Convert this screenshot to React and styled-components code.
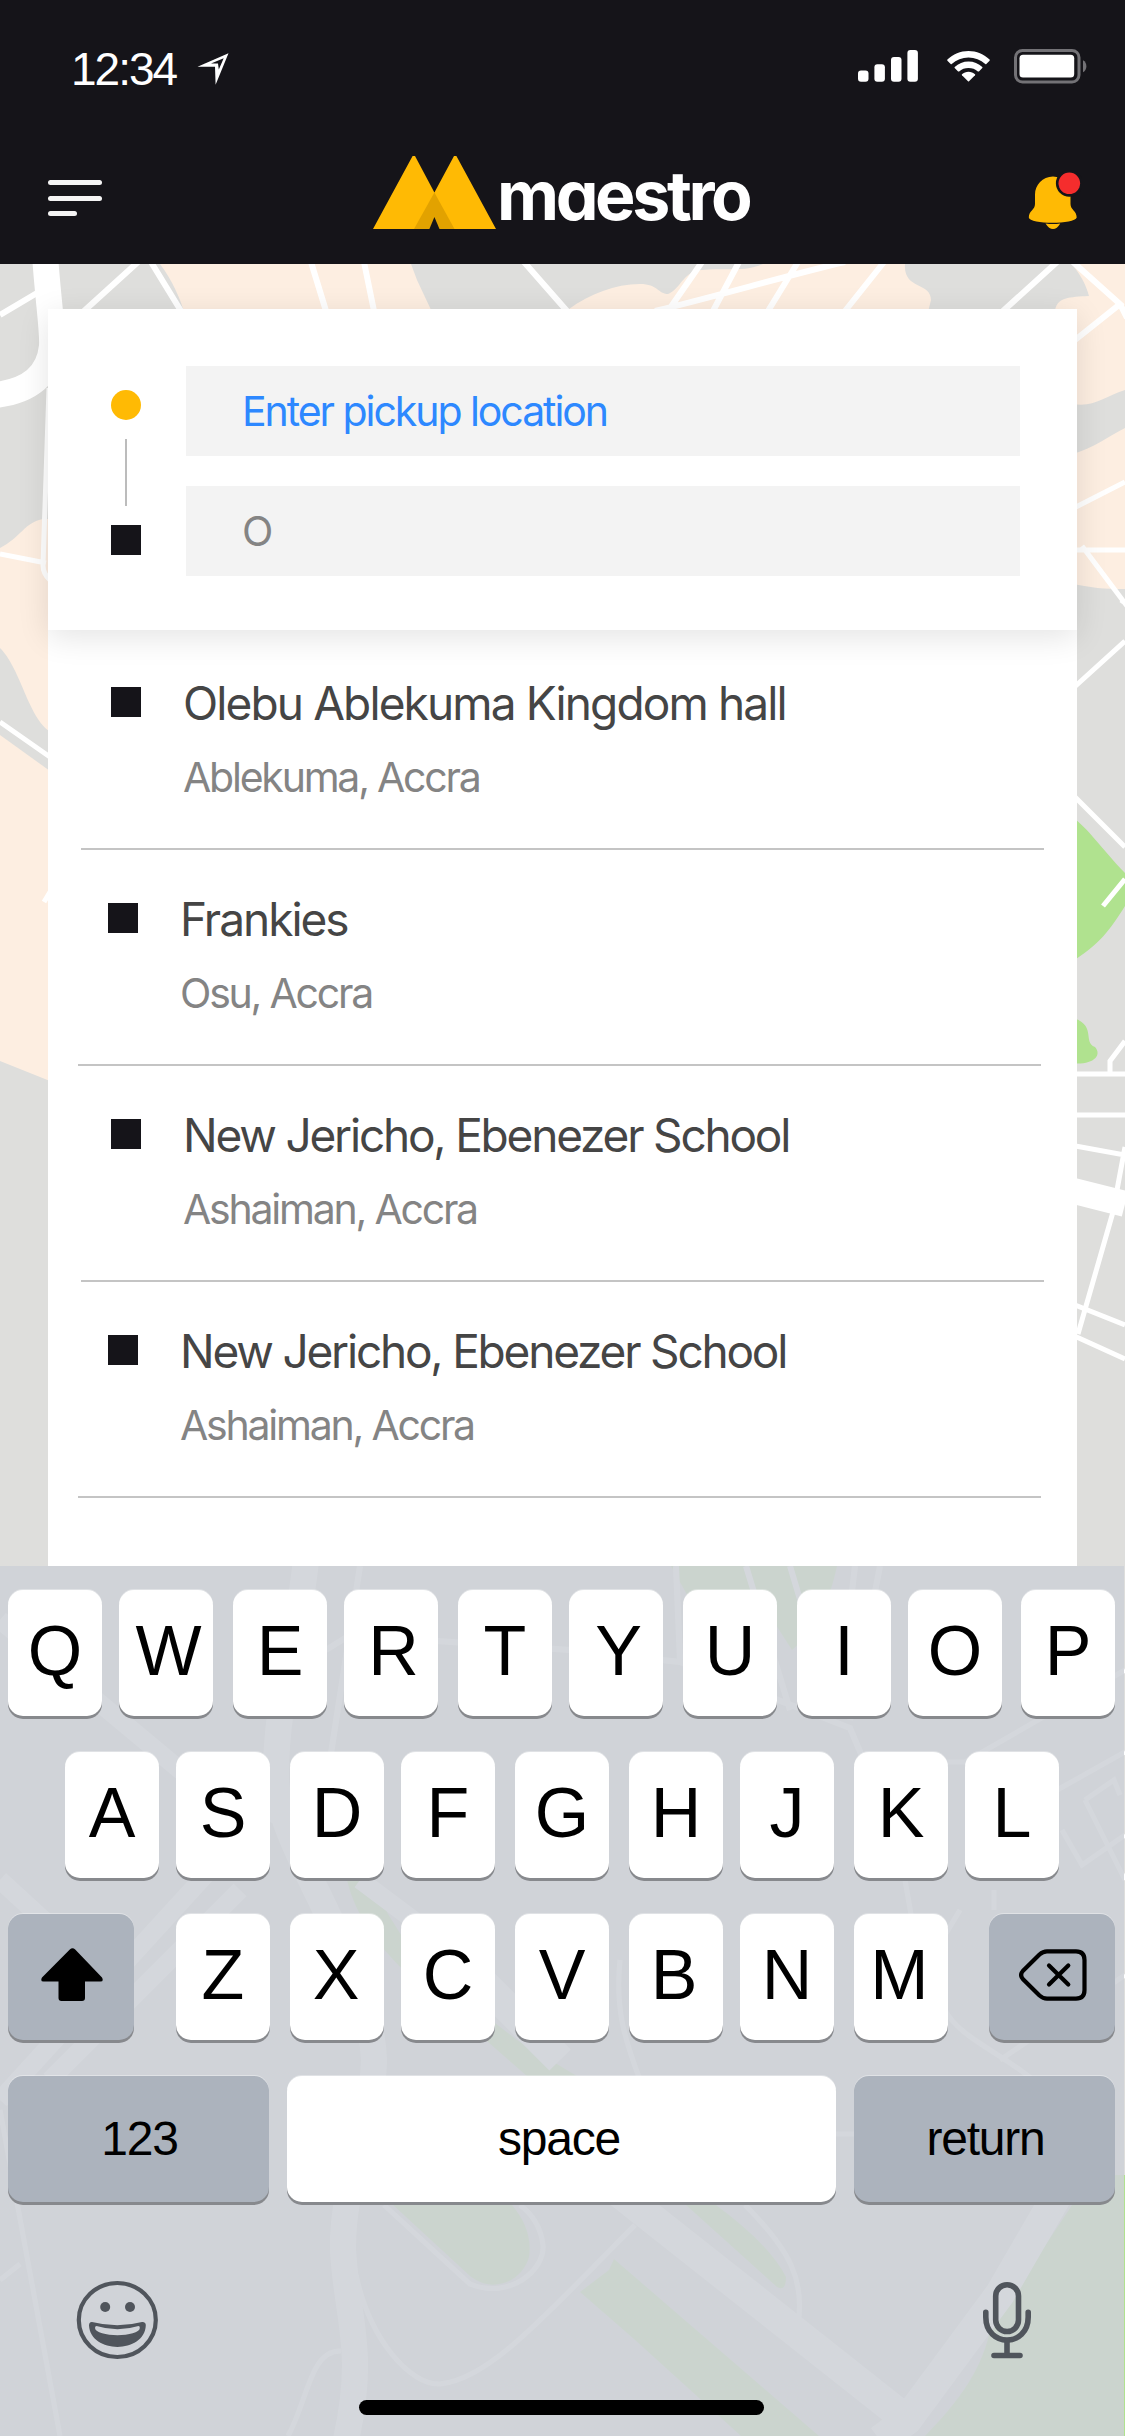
import React from "react";
import styled, { createGlobalStyle } from "styled-components";

const Global = createGlobalStyle`
  * { box-sizing: border-box; }
  body { margin: 0; background: #dededc; }
  button { border: 0; margin: 0; padding: 0; background: none; font: inherit; color: inherit; }
  svg { display: block; flex: none; }
`;

const ui = `"Inter", "Liberation Sans", sans-serif`;
const system = `"Liberation Sans", Arial, sans-serif`;

const Screen = styled.div`
  position: relative;
  width: 1125px;
  height: 2436px;
  overflow: hidden;
  display: flex;
  flex-direction: column;
  font-family: ${ui};
`;

const MapLayer = styled.svg`
  position: absolute;
  inset: 0;
  z-index: 0;
`;

const Header = styled.header`
  position: relative;
  z-index: 1;
  height: 264px;
  flex: none;
  background: #151419;
  color: #fff;
`;

const StatusBar = styled.div`
  display: flex;
  align-items: center;
  height: 136px;
  padding: 2px 38px 0 71px;
  font-family: ${system};
`;

const Time = styled.span`
  width: 126px;
  padding-bottom: 1px;
  font-size: 46px;
  line-height: 52px;
  letter-spacing: -2px;
`;

const StatusIcons = styled.div`
  margin-left: auto;
  padding-bottom: 6px;
  display: flex;
  align-items: center;
  gap: 29px;

  svg:last-child {
    margin-left: -5px;
  }
`;

const NavBar = styled.nav`
  display: flex;
  align-items: flex-start;
  justify-content: space-between;
  padding: 20px 43px 0 48px;
`;

const MenuButton = styled.button`
  display: flex;
  flex-direction: column;
  gap: 10.5px;
  padding-top: 24px;
  width: 54px;
`;

const MenuLine = styled.span`
  width: ${(p) => p.$width}px;
  height: 5px;
  border-radius: 3px;
  background: #f4f4f4;
`;

const Brand = styled.div`
  display: flex;
  align-items: flex-start;
  width: 380px;
  margin-left: -4px;
`;

const BrandName = styled.span`
  padding-top: 2px;
  font-size: 68px;
  font-weight: 700;
  line-height: 74px;
  letter-spacing: -3.4px;
  font-feature-settings: "cv11";
`;

const BellButton = styled.button`
  padding-top: 10px;
`;

const Main = styled.main`
  position: relative;
  z-index: 1;
  flex: none;
  height: 1302px;
  padding: 45px 48px 0;
`;

const Panel = styled.section`
  height: 1257px;
  background: #fff;
`;

const RouteCard = styled.form`
  display: flex;
  height: 321px;
  padding: 57px 57px 54px 63px;
  background: #fff;
  box-shadow: 0 7px 30px rgba(0, 0, 0, 0.11);
`;

const RouteTrack = styled.div`
  display: flex;
  flex-direction: column;
  align-items: center;
  width: 30px;
  padding-top: 24px;
  margin-right: 45px;
`;

const PickupDot = styled.span`
  width: 30px;
  height: 30px;
  border-radius: 50%;
  background: #ffba04;
`;

const TrackLine = styled.span`
  width: 2px;
  height: 67px;
  margin: 19px 0;
  background: #bcbcbc;
`;

const Square = styled.span`
  flex: none;
  width: 30px;
  height: 30px;
  background: #151419;
`;

const Fields = styled.div`
  flex: 1;
  display: flex;
  flex-direction: column;
  gap: 30px;
`;

const Field = styled.div`
  height: 90px;
  padding-left: 56px;
  background: #f3f3f3;
  color: ${(p) => (p.$active ? "#2d88ff" : "#848484")};
  font-size: 41px;
  line-height: 90px;
  letter-spacing: -2.05px;
`;

const PlaceList = styled.ul`
  list-style: none;
  margin: 0;
  padding: 4px 0 0 33px;
`;

const PlaceRow = styled.li`
  display: flex;
  width: 963px;
  height: 216px;
  margin-left: ${(p) => (p.$shifted ? -3 : 0)}px;
  padding: 41px 0 0 30px;
  border-bottom: 2px solid #c4c4c4;

  ${Square} {
    margin: 12px 42px 0 0;
  }
`;

const PlaceName = styled.div`
  font-size: 46px;
  line-height: 56px;
  letter-spacing: ${(p) => p.$tracking}px;
  color: #454545;
  white-space: nowrap;
`;

const PlaceArea = styled.div`
  margin-top: 21px;
  font-size: 41px;
  line-height: 50px;
  letter-spacing: -2.22px;
  color: #848484;
`;

const Keyboard = styled.section`
  position: relative;
  z-index: 1;
  width: 1124px;
  height: 870px;
  flex: none;
  display: flex;
  flex-direction: column;
  background: rgba(206, 210, 215, 0.88);
  font-family: ${system};
  color: #000;
`;

const Keys = styled.div`
  display: flex;
  flex-direction: column;
  gap: 36px;
  padding: 24px 0 0 8px;
`;

const KeyRow = styled.div`
  display: flex;
  height: 126px;
  padding-left: ${(p) => p.$indent || 0}px;
`;

const Key = styled.button`
  display: flex;
  align-items: center;
  justify-content: center;
  flex: none;
  width: ${(p) => p.$width || 94}px;
  height: 126px;
  margin-left: ${(p) => p.$gap || 0}px;
  padding-bottom: ${(p) => (p.$word ? 1 : 4)}px;
  padding-left: ${(p) => Math.max(p.$nudge || 0, 0)}px;
  padding-right: ${(p) => Math.max(-(p.$nudge || 0), 0)}px;
  border-radius: 15px;
  background: ${(p) => (p.$dark ? "#acb3bd" : "#fff")};
  box-shadow: 0 3px 0 #87898d, 0 -1px 0 rgba(255, 255, 255, 0.35);
  font-size: ${(p) => (p.$word ? 48 : 70)}px;
  letter-spacing: ${(p) => (p.$word ? -1.2 : 0)}px;
`;

const KeyboardFooter = styled.div`
  display: flex;
  justify-content: space-between;
  padding: 78px 92px 0 76px;
`;

const HomeIndicator = styled.div`
  width: 405px;
  height: 15px;
  margin: 40px 0 0 359px;
  border-radius: 8px;
  background: #000;
`;

function CityMap() {
  return (
    <MapLayer width="1125" height="2436" viewBox="0 0 1125 2436" fill="none">
      <rect width="1125" height="2436" fill="#dededc" />
      <g fill="#fdeee1">
        <path d="M160 264C172 280 180 298 184 312H432L417 280L411 264Z" />
        <path d="M569 309C590 294 615 284 640 284C658 284 658 294 668 294C680 290 684 270 702 270C730 268 745 272 763 264H905C903 290 931 282 931 300L928 312H569Z" />
        <path d="M1072 264C1082 277 1086 285 1089 296C1070 297 1056 297 1055 312L1060 400C1090 412 1100 398 1125 390V264Z" />
        <path d="M1070 455C1095 448 1110 435 1125 428V589C1105 589 1090 588 1070 583Z" />
        <path d="M0 548C20 538 25 522 43 519H60V735C30 732 24 672 0 648Z" />
        <path d="M0 735L50 771V1081L0 1061Z" />
      </g>
      <g fill="#b0e28f">
        <path d="M1070 815C1090 830 1100 847 1125 873V906C1110 930 1100 944 1070 963Z" />
        <path d="M1070 1017C1098 1024 1082 1042 1095 1047C1103 1056 1092 1066 1070 1063Z" />
        <path d="M671 1566H837C830 1600 815 1630 792 1650L760 1600H690Z" />
        <path d="M346 1875C360 1950 440 2000 488 2042L600 2140L686 2205L777 2287Q786 2292 786 2277Q770 2245 716 2205L600 2090L517 2040L420 1965L388 1914L372 1880Z" />
        <path d="M393 2205L470 2276C492 2294 522 2282 529 2257Q533 2230 512 2205L480 2170H380Z" />
        <path d="M614 2259L609 2270L580 2292L634 2339L741 2436H819Z" />
        <path d="M1125 2175H1090L1072 2205L1025 2276L993 2318C985 2360 970 2390 925 2436H1125Z" />
      </g>
      <g stroke="#fff" strokeWidth="6">
        <path d="M45 255C48 300 53 330 52 346C49 375 30 391 -5 395" strokeWidth="26" />
        <path d="M0 315L37 293M138 262L84 311M151 262L181 311M311 262L326 311M364 262L374 311M524 262L567 311" />
        <path d="M49 388L43 565Q43 574 50 580M0 554L46 563M0 722L50 757M44 902L50 892" strokeWidth="5" />
        <path d="M702 262L668 311M739 262L713 311M798 262L768 311M845 262C800 272 710 298 655 311M884 262L845 311M1057 262L1003 311M1073 262L1120 304L1070 344M1120 304L1127 318" />
        <path d="M1070 510L1125 482M1070 550H1125M1082 546L1127 606M1070 691L1125 641M1121 600L1125 603M1070 792L1125 847M1103 906L1125 879M1110 1072V1061L1125 1041M1070 1074H1125M1070 1115H1125M1070 1145L1125 1155M1117 1190L1125 1147M1113 1212L1078 1334M1070 1303L1125 1325M1070 1334L1125 1359" strokeWidth="5" />
        <path d="M1070 1190L1125 1204" strokeWidth="26" />
        <path d="M306 1560C298 1640 275 1700 276 1780C280 1850 370 1960 374 2060C372 2130 342 2180 343 2250C347 2320 366 2350 346 2440" strokeWidth="26" />
        <path d="M616 2190L907 2420M1066 2180L1000 2294L907 2420L880 2440M440 1940L560 2060" strokeWidth="30" />
        <path d="M0 1620L180 1770L330 1840M0 1880L60 1935M210 1870L0 2100M240 1890L50 2080M360 1880L440 1940" strokeWidth="18" />
        <path d="M360 1566L330 1760M326 1650L350 1635L570 1650L680 1662L850 1728L870 1775M676 1566L680 1660M746 1566L790 1710M790 1566L830 1700M855 1566L845 1650M880 1566L850 1720" />
        <path d="M910 1762H965L1125 1670M1050 1794L1125 1752M1085 1800L1114 1780L1120 1795M1085 1800L1125 1880M1062 1830L1082 1865L1125 1835M905 1880L912 1920M930 1960L960 1910M994 1890V1910M945 2010C960 2040 1010 2055 1050 2095M1000 2060L1125 1975M620 1960C615 2010 625 2040 640 2080" strokeWidth="5" />
        <path d="M0 2110L60 2436M0 2280L20 2264M384 2205L470 2284C510 2300 545 2270 543 2245Q540 2220 520 2205M356 2275C370 2340 410 2385 440 2384C490 2380 550 2310 635 2225M745 2205C790 2250 805 2280 798 2325M341 2351C310 2350 308 2400 288 2436M820 2134H860" strokeWidth="5" />
      </g>
    </MapLayer>
  );
}

function LocationArrow() {
  return (
    <svg width="32" height="32" viewBox="0 0 32 32">
      <path fillRule="evenodd" fill="#fff" d="M31.5 .3L.5 13.7H18L18.6 31.7ZM26.7 5.2L14 10.6H21L21.8 16.6Z" />
    </svg>
  );
}

function Signal() {
  return (
    <svg width="60" height="32" viewBox="0 0 60 32" fill="#fff">
      <rect x="0" y="20.5" width="10.5" height="11.2" rx="3" />
      <rect x="16.4" y="14.3" width="10.5" height="17.4" rx="3" />
      <rect x="33" y="7" width="10.5" height="24.7" rx="3" />
      <rect x="49.4" y="0" width="10.5" height="31.7" rx="3" />
    </svg>
  );
}

function Wifi() {
  return (
    <svg width="43" height="31" viewBox="0 0 43 31" fill="#fff">
      <path d="M21.5 0C29.5 0 37 3.2 42.6 8.6Q43 9.2 42.6 9.7L39.3 13Q38.8 13.4 38.3 13C33.7 8.6 27.8 6.4 21.5 6.4S9.3 8.6 4.7 13Q4.2 13.4 3.7 13L.4 9.7Q0 9.2.4 8.6C6 3.2 13.5 0 21.5 0Z" />
      <path d="M21.5 10.5C26.7 10.5 31.6 12.5 35.3 16Q35.7 16.5 35.3 17L31.9 20.4Q31.4 20.8 30.9 20.4C28.3 18.2 25 17 21.5 17S14.7 18.2 12.1 20.4Q11.6 20.8 11.1 20.4L7.7 17Q7.3 16.5 7.7 16C11.4 12.5 16.3 10.5 21.5 10.5Z" />
      <path d="M21.5 20.8C24 20.8 26.3 21.7 28 23.2Q28.5 23.7 28 24.2L22 30.2Q21.5 30.6 21 30.2L15 24.2Q14.5 23.7 15 23.2C16.7 21.7 19 20.8 21.5 20.8Z" />
    </svg>
  );
}

function Battery() {
  return (
    <svg width="73" height="35" viewBox="0 0 73 35">
      <rect x="1.5" y="1.5" width="63.5" height="31.5" rx="7" fill="none" stroke="#737276" strokeWidth="3" />
      <rect x="5.5" y="5.7" width="54.7" height="22.8" rx="3.5" fill="#fff" />
      <path d="M69 11.2C73.5 13.5 73.5 21 69 23.3Z" fill="#737276" />
    </svg>
  );
}

function BrandMark() {
  return (
    <svg width="124" height="74" viewBox="0 0 124 74">
      <path fill="#ffba04" d="M0 73L39.6 0H42L61.4 36.5L81 0H83.4L123 73Z" />
      <path fill="#e2a200" d="M61.4 36.5L81.5 73H41Z" />
      <path fill="#151419" d="M61.4 61L66.7 73.5H56.2Z" />
    </svg>
  );
}

function Bell() {
  return (
    <svg width="54" height="64" viewBox="0 0 54 64">
      <path fill="#ffba04" d="M25 10.5C35 10.5 42.5 19 42.5 28.5V38C42.5 44 48.7 44.5 48.7 51.5C47 58.5 1.5 58.5.8 51.5C.8 44.5 7 44 7 38V28.5C7 19 14.5 10.5 25 10.5Z" />
      <path fill="#ffba04" d="M17.5 57.5Q25 58.6 32.3 57.5Q29 63 25 63T17.5 57.5Z" />
      <circle cx="41.3" cy="17.3" r="13.4" fill="#151419" />
      <circle cx="41.3" cy="17.3" r="10.8" fill="#f52d2d" />
    </svg>
  );
}

function ShiftIcon() {
  return (
    <svg width="62" height="54" viewBox="0 0 62 54">
      <path d="M28.8 1.5Q31.5-1 34.2 1.5L61 29.5Q63 33.5 59.5 33.5H44V50Q44 53 41 53H20.5Q17.5 53 17.5 50V33.5H2.5Q-1 33.5 1 29.5Z" />
    </svg>
  );
}

function DeleteIcon() {
  return (
    <svg width="68" height="52" viewBox="0 0 68 52" fill="none" stroke="#000" strokeWidth="4.2" strokeLinejoin="round" strokeLinecap="round">
      <path d="M28 2.4H57Q65.5 2.4 65.5 11V41Q65.5 49.6 57 49.6H28Q24 49.6 20.5 46.5L3.8 30Q.4 26 3.8 22L20.5 5.5Q24 2.4 28 2.4Z" />
      <path d="M30 16.4L49.3 35.6M49.3 16.4L30 35.6" />
    </svg>
  );
}

function EmojiIcon() {
  return (
    <svg width="82" height="80" viewBox="0 0 82 80" fill="#50555c">
      <ellipse cx="41.3" cy="40" rx="38.5" ry="37" fill="none" stroke="#50555c" strokeWidth="4.2" />
      <circle cx="29.2" cy="27" r="5" />
      <circle cx="54" cy="27" r="5" />
      <path fillRule="evenodd" d="M16 42Q41.5 48.5 66 42Q70 41.8 69.8 45.5C68.5 74 14.5 74 13 45.5Q13 41.8 16 42ZM20.5 46Q41.5 52.5 62.5 46Q64 46 63.8 48C63.5 57.5 19.5 57.5 19 48Q19 46 20.5 46Z" />
    </svg>
  );
}

function MicIcon() {
  return (
    <svg width="50" height="80" viewBox="0 0 50 80" fill="none" stroke="#50555c" strokeWidth="5.6" strokeLinecap="round">
      <rect x="13.7" y="4.7" width="22.8" height="46.8" rx="11.4" />
      <path d="M3.8 32.3V37C3.8 67.8 46.2 67.8 46.2 37V32.3" />
      <path d="M25 61V74M12 75.5H38" />
    </svg>
  );
}

const places = [
  { name: "Olebu Ablekuma Kingdom hall", area: "Ablekuma, Accra", tracking: -1.87 },
  { name: "Frankies", area: "Osu, Accra", tracking: -2 },
  { name: "New Jericho, Ebenezer School", area: "Ashaiman, Accra", tracking: -2.2 },
  { name: "New Jericho, Ebenezer School", area: "Ashaiman, Accra", tracking: -2.2 },
];

const topKeys = [["Q", 0], ["W", 17, 5], ["E", 20], ["R", 17, 5], ["T", 20], ["Y", 17, 5], ["U", 20], ["I", 20], ["O", 17], ["P", 19]];
const homeKeys = [["A", 0], ["S", 17], ["D", 20], ["F", 17], ["G", 20], ["H", 20], ["J", 17], ["K", 20], ["L", 17]];
const lowKeys = [["Z", 42], ["X", 20, -2], ["C", 17], ["V", 20], ["B", 20, -4], ["N", 17], ["M", 20, -3]];

const renderKeys = (keys) =>
  keys.map(([label, gap, nudge]) => (
    <Key key={label} $gap={gap} $nudge={nudge}>{label}</Key>
  ));

export default function App() {
  return (
    <Screen>
      <Global />
      <CityMap />
      <Header>
        <StatusBar>
          <Time>12:34</Time>
          <LocationArrow />
          <StatusIcons>
            <Signal />
            <Wifi />
            <Battery />
          </StatusIcons>
        </StatusBar>
        <NavBar>
          <MenuButton aria-label="Menu">
            <MenuLine $width={54} />
            <MenuLine $width={54} />
            <MenuLine $width={29} />
          </MenuButton>
          <Brand>
            <BrandMark />
            <BrandName>maestro</BrandName>
          </Brand>
          <BellButton aria-label="Notifications">
            <Bell />
          </BellButton>
        </NavBar>
      </Header>
      <Main>
        <Panel>
          <RouteCard>
            <RouteTrack>
              <PickupDot />
              <TrackLine />
              <Square />
            </RouteTrack>
            <Fields>
              <Field $active>Enter pickup location</Field>
              <Field>O</Field>
            </Fields>
          </RouteCard>
          <PlaceList>
            {places.map((place, i) => (
              <PlaceRow key={i} $shifted={i % 2 === 1}>
                <Square />
                <div>
                  <PlaceName $tracking={place.tracking}>{place.name}</PlaceName>
                  <PlaceArea>{place.area}</PlaceArea>
                </div>
              </PlaceRow>
            ))}
          </PlaceList>
        </Panel>
      </Main>
      <Keyboard>
        <Keys>
          <KeyRow>{renderKeys(topKeys)}</KeyRow>
          <KeyRow $indent={57}>{renderKeys(homeKeys)}</KeyRow>
          <KeyRow>
            <Key $dark $width={126} $nudge={2} aria-label="Shift"><ShiftIcon /></Key>
            {renderKeys(lowKeys)}
            <Key $dark $width={126} $gap={41} $nudge={2} aria-label="Delete"><DeleteIcon /></Key>
          </KeyRow>
          <KeyRow>
            <Key $dark $word $width={261} $nudge={2}>123</Key>
            <Key $word $width={549} $gap={18} $nudge={-5}>space</Key>
            <Key $dark $word $width={261} $gap={18} $nudge={2}>return</Key>
          </KeyRow>
        </Keys>
        <KeyboardFooter>
          <EmojiIcon />
          <MicIcon />
        </KeyboardFooter>
        <HomeIndicator />
      </Keyboard>
    </Screen>
  );
}
